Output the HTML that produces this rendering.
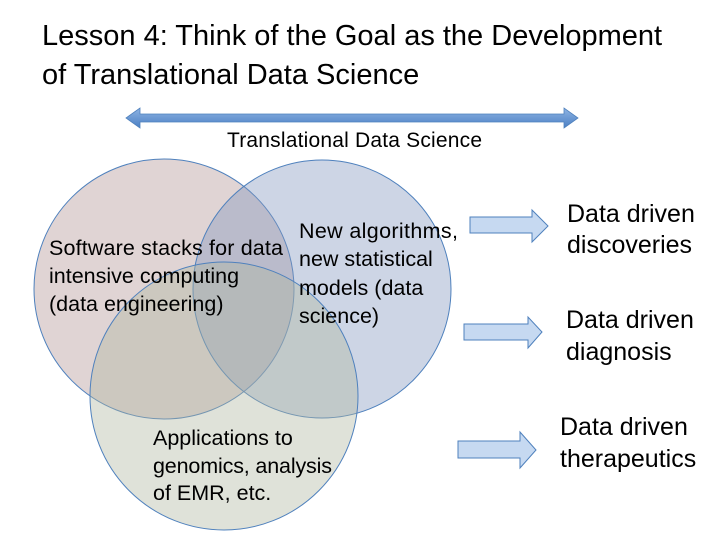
<!DOCTYPE html>
<html><head><style>
body{margin:0;background:#fff;}
svg{display:block}
text{font-family:"Liberation Sans",sans-serif;fill:#000}
</style></head><body>
<svg width="720" height="540" viewBox="0 0 720 540">
<text x="42" y="45" font-size="29">Lesson 4: Think of the Goal as the Development</text>
<text x="42" y="84" font-size="29">of Translational Data Science</text>
<defs><linearGradient id="g" x1="0" y1="0" x2="0" y2="1"><stop offset="0" stop-color="#8fb4e3"/><stop offset="1" stop-color="#4a7fc4"/></linearGradient></defs>
<path d="M126,118 L140,108 L140,114 L564,114 L564,108 L578,118 L564,128 L564,122 L140,122 L140,128 Z" fill="url(#g)" stroke="#4f81bd" stroke-width="0.8"/>
<text x="227" y="147" font-size="21" textLength="255">Translational Data Science</text>
<circle cx="164" cy="289" r="130" fill="#b29494" fill-opacity="0.4" stroke="#4f81bd" stroke-width="1"/>
<circle cx="322" cy="289" r="129" fill="#8296be" fill-opacity="0.4" stroke="#4f81bd" stroke-width="1"/>
<circle cx="224" cy="396" r="134" fill="#afb6a0" fill-opacity="0.4" stroke="#4f81bd" stroke-width="1"/>
<g font-size="21.5">
<text x="49" y="255" textLength="234">Software stacks for data</text>
<text x="49" y="283">intensive computing</text>
<text x="49" y="311">(data engineering)</text>
<text x="299" y="238" textLength="159">New algorithms,</text>
<text x="299" y="266">new statistical</text>
<text x="299" y="295">models (data</text>
<text x="299" y="323">science)</text>
<text x="153" y="445">Applications to</text>
<text x="153" y="473" textLength="179">genomics, analysis</text>
<text x="153" y="500">of EMR, etc.</text>
</g>
<g fill="#c6d9f1" stroke="#4f81bd" stroke-width="1">
<path d="M470,217 L532,217 L532,210 L548,226 L532,242 L532,233 L470,233 Z"/>
<path d="M464,324 L528,324 L528,317 L542,332 L528,348 L528,340 L464,340 Z"/>
<path d="M458,441 L520,441 L520,432 L536,450 L520,468 L520,458 L458,458 Z"/>
</g>
<g font-size="25">
<text x="567" y="222">Data driven</text>
<text x="567" y="253">discoveries</text>
<text x="566" y="328">Data driven</text>
<text x="566" y="360">diagnosis</text>
<text x="560" y="435">Data driven</text>
<text x="560" y="467">therapeutics</text>
</g>
</svg>
</body></html>
